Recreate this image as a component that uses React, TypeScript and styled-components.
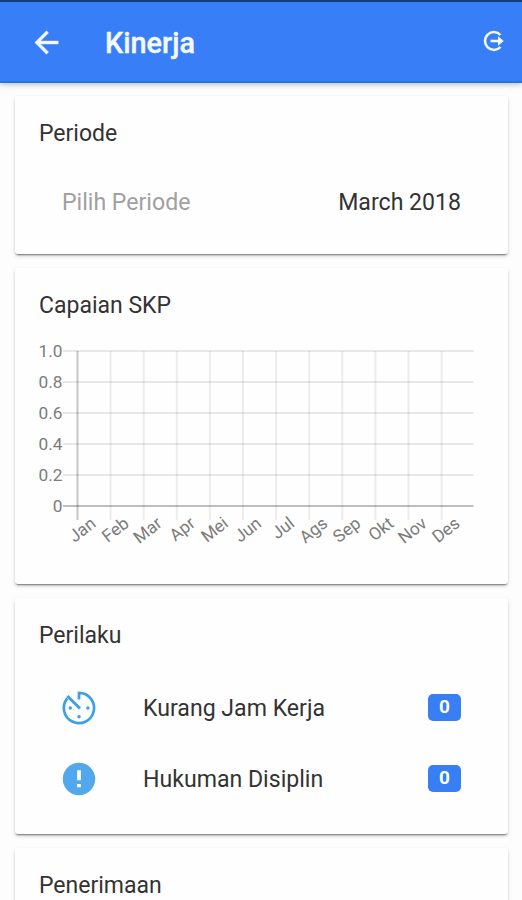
import React from "react";
import styled, { createGlobalStyle } from "styled-components";
import { IoMdAlert } from "react-icons/io";

const GlobalStyle = createGlobalStyle`
  * { box-sizing: border-box; }
  html, body { margin: 0; background: #fdfdfd; }
  body { font-family: Roboto, sans-serif; color: #333; overflow: hidden; }
`;

const Screen = styled.div`
  height: 900px;
  overflow: hidden;
  display: flex;
  flex-direction: column;
`;

const Toolbar = styled.header`
  flex: none;
  height: 83px;
  padding: 0 17px 0 29px;
  display: flex;
  align-items: center;
  background: #387ef7;
  border-top: 2px solid #163c7c;
  border-bottom: 2px solid #2377e2;
  box-shadow: 0 1px 6px rgba(0, 0, 0, 0.3);
  color: #f4f9ff;
`;

const IconButton = styled.button`
  display: flex;
  padding: 1px 0 0;
  border: 0;
  background: none;
  color: inherit;
`;

const Title = styled.h1`
  flex: 1;
  margin: 2px 0 0 41px;
  font-size: 28.8px;
  line-height: 36px;
  font-weight: 500;
  -webkit-text-stroke: 0.4px currentColor;
`;

const Content = styled.main`
  display: flex;
  flex-direction: column;
  gap: 14px;
  padding: 13px 14px 0 15px;
`;

const Card = styled.section<{ $height: number }>`
  flex: none;
  height: ${(p) => p.$height}px;
  border-radius: 3px;
  background: #fefefe;
  box-shadow: 0 2px 2px -1px rgba(0, 0, 0, 0.5), 0 2px 4px rgba(0, 0, 0, 0.14);
`;

const CardTitle = styled.h2`
  margin: 0;
  padding: 24px 24px 0;
  font-size: 23px;
  line-height: 28px;
  font-weight: 400;
`;

const List = styled.div<{ $offset: number }>`
  padding: ${(p) => p.$offset}px 47px 0;
`;

const Row = styled.div`
  height: 71px;
  display: flex;
  align-items: center;
  font-size: 23.1px;
`;

const RowIcon = styled.span`
  display: flex;
  width: 84px;
  margin-left: -3px;
  color: #52a8ec;
`;

const Label = styled.span<{ $muted?: boolean }>`
  flex: 1;
  padding-top: 2px;
  color: ${(p) => (p.$muted ? "#a0a0a0" : "inherit")};
`;

const Value = styled.span`
  padding-top: 2px;
`;

const Badge = styled.span`
  width: 33px;
  height: 27px;
  border-radius: 5px;
  background: #387ef5;
  color: #fff;
  font-size: 19px;
  line-height: 26px;
  font-weight: 700;
  text-align: center;
`;

const Chart = styled.svg`
  display: block;
  margin-top: 12px;
  font-size: 17.3px;
  fill: #7c7c7c;
`;

const months = ["Jan", "Feb", "Mar", "Apr", "Mei", "Jun", "Jul", "Ags", "Sep", "Okt", "Nov", "Des"];
const levels = ["1.0", "0.8", "0.6", "0.4", "0.2", "0"];

function SkpChart() {
  const left = 62.5;
  const top = 19;
  const stepX = 33.1;
  const stepY = 31;
  return (
    <Chart width="493" height="225">
      {levels.map((text, i) => {
        const y = top + i * stepY;
        return (
          <g key={text}>
            <line x1="48" x2="458.5" y1={y} y2={y} stroke="#000" strokeOpacity={i === 5 ? 0.25 : 0.09} strokeWidth="1.8" />
            <text x="47.5" y={y + 5.5} textAnchor="end">{text}</text>
          </g>
        );
      })}
      {months.map((text, i) => {
        const x = left + i * stepX;
        return (
          <g key={text}>
            <line x1={x} x2={x} y1={top} y2={top + 169} stroke="#000" strokeOpacity={i === 0 ? 0.22 : 0.07} strokeWidth="2" />
            <text transform={`translate(${x + 19.5} ${top + 174.5}) rotate(-38)`} textAnchor="end">{text}</text>
          </g>
        );
      })}
    </Chart>
  );
}

function BackIcon() {
  return (
    <svg width="35" height="35" viewBox="0 0 24 24" fill="currentColor" stroke="currentColor" strokeWidth="0.3">
      <path d="M20 11H7.83l5.59-5.59L12 4l-8 8 8 8 1.41-1.41L7.83 13H20v-2z" />
    </svg>
  );
}

function LogoutIcon() {
  return (
    <svg width="22" height="24" viewBox="0 0 22 24" fill="none" stroke="currentColor">
      <path d="M17.5 5A8.9 8.9 0 1 0 17.5 17" strokeWidth="2.5" />
      <path d="M7.5 11H16" strokeWidth="2.6" />
      <path d="M15 6.2L20.8 11L15 15.8Z" fill="currentColor" stroke="none" />
    </svg>
  );
}

function TimerIcon() {
  return (
    <svg width="40" height="40" viewBox="0 0 40 40" fill="none" stroke="#3d9fe9" strokeWidth="2.7">
      <path d="M20 11.5V4.9A15.1 15.1 0 1 1 8.3 10.4" />
      <path d="M8.3 8L21 20.5" strokeWidth="3" />
      <g fill="#3d9fe9" stroke="none">
        <circle cx="11.3" cy="20" r="1.7" />
        <circle cx="20" cy="28.8" r="1.7" />
        <circle cx="28.9" cy="20" r="1.7" />
      </g>
    </svg>
  );
}

export default function App() {
  return (
    <Screen>
      <GlobalStyle />
      <Toolbar>
        <IconButton aria-label="Kembali"><BackIcon /></IconButton>
        <Title>Kinerja</Title>
        <IconButton aria-label="Keluar"><LogoutIcon /></IconButton>
      </Toolbar>
      <Content>
        <Card $height={158}>
          <CardTitle>Periode</CardTitle>
          <List $offset={18}>
            <Row><Label $muted>Pilih Periode</Label><Value>March 2018</Value></Row>
          </List>
        </Card>
        <Card $height={316}>
          <CardTitle>Capaian SKP</CardTitle>
          <SkpChart />
        </Card>
        <Card $height={236}>
          <CardTitle>Perilaku</CardTitle>
          <List $offset={22}>
            <Row><RowIcon><TimerIcon /></RowIcon><Label>Kurang Jam Kerja</Label><Badge>0</Badge></Row>
            <Row><RowIcon><IoMdAlert size={40} /></RowIcon><Label>Hukuman Disiplin</Label><Badge>0</Badge></Row>
          </List>
        </Card>
        <Card $height={156}>
          <CardTitle>Penerimaan</CardTitle>
        </Card>
      </Content>
    </Screen>
  );
}
